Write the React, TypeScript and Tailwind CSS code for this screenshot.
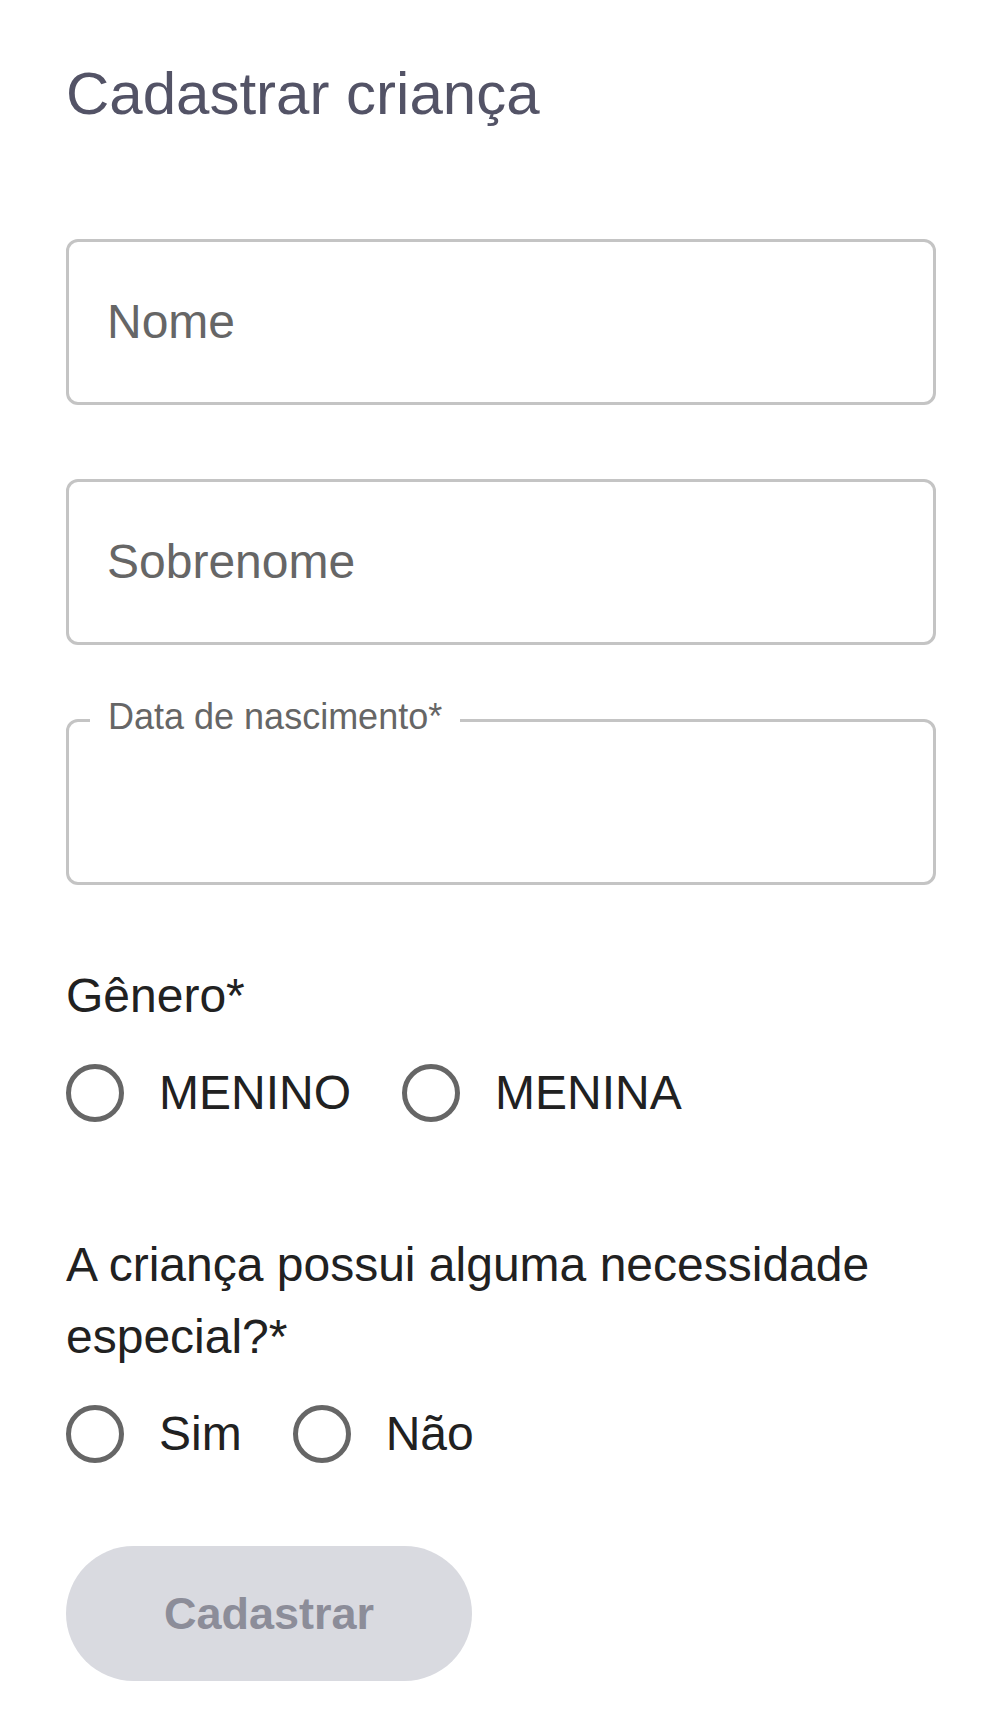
import React from "react";

function TextBox({ label }: { label: string }) {
  return (
    <div className="flex h-[166px] items-center rounded-[12px] border-[3px] border-[#c4c4c4] pl-[38px]">
      <span className="text-[48px] leading-[72px] text-[#666666]">{label}</span>
    </div>
  );
}

function RadioItem({ label }: { label: string }) {
  return (
    <div className="flex items-center gap-[35px]">
      <div className="h-[58px] w-[58px] shrink-0 rounded-full border-[5px] border-[#666666]" />
      <span className="text-[48px] leading-[72px] text-[#212121]">{label}</span>
    </div>
  );
}

export default function App() {
  return (
    <div className="min-h-[1734px] bg-white pl-[66px] pr-[67px] pt-[58px] font-['Liberation_Sans',Arial,Helvetica,sans-serif]">
      <h1 className="text-[60px] font-normal leading-[72px] text-[#535366]">Cadastrar criança</h1>

      <div className="mt-[109px] flex flex-col gap-[74px]">
        <TextBox label="Nome" />
        <TextBox label="Sobrenome" />
        <div className="relative h-[166px] rounded-[12px] border-[3px] border-[#c4c4c4]">
          <span className="absolute left-[21px] top-[-23px] bg-white px-[18px] text-[36px] leading-[36px] text-[#666666]">
            Data de nascimento*
          </span>
        </div>
      </div>

      <div className="mt-[75px]">
        <p className="text-[48px] leading-[72px] text-[#212121]">Gênero*</p>
        <div className="flex h-[122px] items-center gap-[51px]">
          <RadioItem label="MENINO" />
          <RadioItem label="MENINA" />
        </div>
      </div>

      <div className="mt-[75px]">
        <p className="text-[48px] leading-[72px] text-[#212121]">A criança possui alguma necessidade especial?*</p>
        <div className="flex h-[122px] items-center gap-[51px]">
          <RadioItem label="Sim" />
          <RadioItem label="Não" />
        </div>
      </div>

      <button
        type="button"
        className="mt-[51px] flex h-[135px] w-[406px] items-center justify-center rounded-full bg-[#d9dae0] text-[45px] font-bold text-[#8c8d99]"
      >
        Cadastrar
      </button>
    </div>
  );
}
